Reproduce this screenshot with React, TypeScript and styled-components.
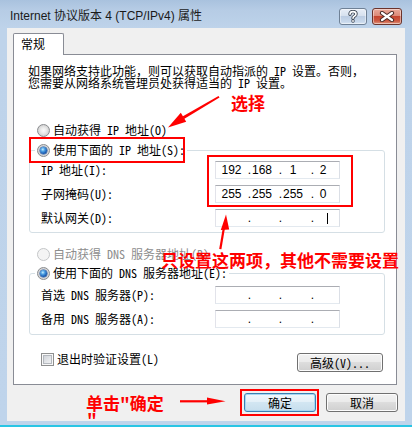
import React from "react";
import styled, { createGlobalStyle } from "styled-components";

const GlobalStyle = createGlobalStyle`
  html, body { margin: 0; padding: 0; background: #fff; }
  body { width: 412px; height: 427px; overflow: hidden; }
  *, *::before, *::after { box-sizing: border-box; }
`;

const UI_FONT = `"Noto Sans Mono CJK SC", "Noto Sans CJK SC", sans-serif`;

const Window = styled.div`
  position: relative;
  width: 412px;
  height: 427px;
  overflow: hidden;
  display: flex;
  flex-direction: column;
  padding: 0 7px;
  background: linear-gradient(180deg, #a9c2de 0px, #b6cce5 10px, #bed3ea 28px, #bfd4eb 100%);
  border-bottom: 2px solid #2ac5e4;
  font-family: ${UI_FONT};
  color: #000;
`;

const TitleBar = styled.div`
  height: 28px;
  flex: none;
  display: flex;
  align-items: flex-start;
  padding: 0 3px;
`;

const Title = styled.div`
  flex: 1;
  margin-top: 9px;
  font-family: "Liberation Sans", "Noto Sans CJK SC", sans-serif;
  font-size: 12px;
  line-height: 15px;
  color: #1a1a1a;
  white-space: nowrap;
`;

const CaptionButtons = styled.div`
  display: flex;
  gap: 5px;
  margin-top: 8px;
`;

const CaptionButton = styled.div<{ $close?: boolean }>`
  width: ${(p) => (p.$close ? 30 : 28)}px;
  height: 17px;
  border-radius: 3px;
  border: 1px solid ${(p) => (p.$close ? "#6b342c" : "#6f8196")};
  background: ${(p) =>
    p.$close
      ? "linear-gradient(180deg, #e9a99a 0%, #dc8a78 45%, #c5452f 50%, #cc5a43 80%, #e09a82 100%)"
      : "linear-gradient(180deg, #e8eef7 0%, #d6e1ef 45%, #bccde3 50%, #c9d9ec 85%, #dbe6f3 100%)"};
  box-shadow: inset 0 0 0 1px rgba(255, 255, 255, 0.45);
  display: flex;
  align-items: center;
  justify-content: center;
`;

const Client = styled.div`
  height: 393px;
  flex: none;
  background: #f0f0f0;
  padding: 5px 8px 0 6px;
  display: flex;
  flex-direction: column;
`;

const TabStrip = styled.div`
  display: flex;
`;

const Tab = styled.div`
  position: relative;
  z-index: 1;
  width: 51px;
  height: 22px;
  margin-bottom: -1px;
  padding: 2px 0 0 7px;
  border: 1px solid #898c95;
  border-bottom: none;
  border-radius: 2px 2px 0 0;
  background: #fff;
  font-size: 12px;
  line-height: 16px;
`;

const Panel = styled.div`
  height: 331px;
  flex: none;
  border: 1px solid #898c95;
  background: #fff;
  padding: 10px 11px 0 15px;
  display: flex;
  flex-direction: column;
`;

const Description = styled.div`
  margin-left: -1px;
  font-size: 12px;
  line-height: 12px;
  white-space: nowrap;
`;

const RadioRow = styled.div<{ $top: number; $disabled?: boolean }>`
  display: flex;
  align-items: center;
  gap: 3px;
  height: 16px;
  margin-top: ${(p) => p.$top}px;
  padding-left: 8px;
  font-size: 12px;
  line-height: 16px;
  white-space: nowrap;
  color: ${(p) => (p.$disabled ? "#8d8d8d" : "#000")};
`;

const RadioDot = styled.span<{ $checked?: boolean; $disabled?: boolean }>`
  flex: none;
  width: 13px;
  height: 13px;
  border-radius: 50%;
  border: 1px solid ${(p) => (p.$disabled ? "#c4c6c8" : "#8a8c8f")};
  background: ${(p) =>
    p.$disabled
      ? "#f4f4f4"
      : "radial-gradient(circle at 50% 50%, #fafafa 0, #ececec 35%, #d4d4d4 70%, #f2f2f2 100%)"};
  display: flex;
  align-items: center;
  justify-content: center;
  &::after {
    content: "";
    display: ${(p) => (p.$checked ? "block" : "none")};
    width: 7px;
    height: 7px;
    border-radius: 50%;
    background: radial-gradient(circle at 40% 35%, #c8eeff 0, #4fa2e4 30%, #1a5cb3 65%, #0b3a80 100%);
    box-shadow: 0 0 0 0.5px #1b4d96;
  }
`;

const GroupBox = styled.div<{ $top: number; $bottom: number }>`
  margin-top: ${(p) => p.$top}px;
  border: 1px solid #d5dfe5;
  border-radius: 3px;
  padding: 0 0 ${(p) => p.$bottom}px 11px;
  display: flex;
  flex-direction: column;
`;

const Legend = styled.div`
  align-self: flex-start;
  display: flex;
  align-items: center;
  gap: 3px;
  height: 16px;
  margin: -9px 0 0 -6px;
  padding: 0 2px;
  background: #fff;
  font-size: 12px;
  line-height: 16px;
  white-space: nowrap;
`;

const FieldGrid = styled.div<{ $top: number }>`
  display: grid;
  grid-template-columns: 174px 125px;
  row-gap: 6px;
  align-items: center;
  margin-top: ${(p) => p.$top}px;
`;

const FieldLabel = styled.div`
  font-size: 12px;
  line-height: 16px;
  white-space: nowrap;
`;

const IPBox = styled.div`
  height: 18px;
  border: 1px solid;
  border-color: #abadb3 #dbdfe6 #e3e9ef #e2e3ea;
  background: #fff;
  display: grid;
  grid-template-columns: 31px 4px 22px 9px 22px 10px 18px;
  align-items: center;
  font-family: "Liberation Sans", Arial, sans-serif;
  font-size: 12px;
  line-height: 16px;
`;

const Octet = styled.span`
  display: flex;
  justify-content: center;
  align-items: center;
  height: 16px;
`;

const Dot = styled.span`
  text-align: right;
`;

const Caret = styled.span`
  display: block;
  width: 1px;
  height: 11px;
  background: #000;
  margin-left: 13px;
`;

const OptionsRow = styled.div`
  display: flex;
  justify-content: space-between;
  align-items: flex-start;
  margin-top: 16px;
  padding: 0 2px 0 12px;
`;

const CheckRow = styled.label`
  display: flex;
  align-items: center;
  gap: 3px;
  height: 16px;
  font-size: 12px;
  line-height: 16px;
  white-space: nowrap;
`;

const CheckBox = styled.span`
  flex: none;
  width: 13px;
  height: 13px;
  border: 1px solid #8e8f8f;
  background: linear-gradient(135deg, #c6cad0 0%, #e6e8eb 60%, #f6f6f6 100%);
  box-shadow: inset 0 0 0 1px #f8f8f8, inset 0 0 0 2px #b4b8be;
`;

const Button = styled.div<{ $w: number; $primary?: boolean; $top?: number }>`
  width: ${(p) => p.$w}px;
  height: 19px;
  margin-top: ${(p) => p.$top ?? 0}px;
  border-radius: 3px;
  border: 1px solid ${(p) => (p.$primary ? "#3c7fb1" : "#707070")};
  background: ${(p) =>
    p.$primary
      ? "linear-gradient(180deg, #f1f8fc 0%, #e4f0f8 45%, #d2e6f2 50%, #c6deed 100%)"
      : "linear-gradient(180deg, #f2f2f2 0%, #ebebeb 45%, #dddddd 50%, #cfcfcf 100%)"};
  box-shadow: inset 0 0 0 1px ${(p) => (p.$primary ? "#a6d7f2" : "#fcfcfc")};
  display: flex;
  align-items: center;
  justify-content: center;
  font-size: 12px;
  line-height: 16px;
  white-space: nowrap;
`;

const ButtonRow = styled.div`
  display: flex;
  justify-content: flex-end;
  gap: 10px;
  margin-top: 8px;
  margin-right: -1px;
`;

/* ---------- annotation layer (drawn over the dialog) ---------- */

const Note = styled.div<{ $x: number; $y: number; $lh?: number }>`
  position: absolute;
  left: ${(p) => p.$x}px;
  top: ${(p) => p.$y}px;
  color: #ff0000;
  font-family: "Noto Sans CJK SC", sans-serif;
  font-weight: 700;
  font-size: 17px;
  line-height: ${(p) => p.$lh ?? 17}px;
  white-space: nowrap;
  pointer-events: none;
`;

const RedBox = styled.div<{ $x: number; $y: number; $w: number; $h: number }>`
  position: absolute;
  left: ${(p) => p.$x}px;
  top: ${(p) => p.$y}px;
  width: ${(p) => p.$w}px;
  height: ${(p) => p.$h}px;
  border: 2px solid #ff0000;
  pointer-events: none;
`;

const ArrowLayer = styled.svg`
  position: absolute;
  left: 0;
  top: 0;
  pointer-events: none;
`;

type IPProps = { octets?: [string, string, string, string]; caret?: boolean };

const IPField: React.FC<IPProps> = ({ octets = ["", "", "", ""], caret }) => (
  <IPBox>
    <Octet>{octets[0]}</Octet>
    <Dot>.</Dot>
    <Octet>{octets[1]}</Octet>
    <Dot>.</Dot>
    <Octet>{octets[2]}</Octet>
    <Dot>.</Dot>
    {caret ? <Caret /> : <Octet>{octets[3]}</Octet>}
  </IPBox>
);

export default function App() {
  return (
    <>
      <GlobalStyle />
      <Window>
        <TitleBar>
          <Title>Internet 协议版本 4 (TCP/IPv4) 属性</Title>
          <CaptionButtons>
            <CaptionButton>
              <svg width="12" height="13" viewBox="0 0 12 13">
                <path
                  d="M3 4.2 Q3 1.6 6 1.6 Q9 1.6 9 4 Q9 5.4 7.3 6.2 Q6 6.8 6 8.2"
                  fill="none"
                  stroke="#3b4452"
                  strokeWidth="3.4"
                  strokeLinecap="round"
                />
                <circle cx="6" cy="11" r="1.7" fill="#3b4452" />
                <path
                  d="M3 4.2 Q3 1.6 6 1.6 Q9 1.6 9 4 Q9 5.4 7.3 6.2 Q6 6.8 6 8.2"
                  fill="none"
                  stroke="#fff"
                  strokeWidth="1.6"
                  strokeLinecap="round"
                />
                <circle cx="6" cy="11" r="0.9" fill="#fff" />
              </svg>
            </CaptionButton>
            <CaptionButton $close>
              <svg width="16" height="11" viewBox="0 0 16 11">
                <path d="M3 2 L13 9 M13 2 L3 9" stroke="#4a2a26" strokeWidth="4.2" strokeLinecap="round" />
                <path d="M3 2 L13 9 M13 2 L3 9" stroke="#fff" strokeWidth="2.2" strokeLinecap="round" />
              </svg>
            </CaptionButton>
          </CaptionButtons>
        </TitleBar>

        <Client>
          <TabStrip>
            <Tab>常规</Tab>
          </TabStrip>
          <Panel>
            <Description>
              如果网络支持此功能，则可以获取自动指派的 IP 设置。否则，
              <br />
              您需要从网络系统管理员处获得适当的 IP 设置。
            </Description>

            <RadioRow $top={33}>
              <RadioDot />
              自动获得 IP 地址(O)
            </RadioRow>

            <GroupBox $top={12} $bottom={5}>
              <Legend>
                <RadioDot $checked />
                使用下面的 IP 地址(S):
              </Legend>
              <FieldGrid $top={3}>
                <FieldLabel>IP 地址(I):</FieldLabel>
                <IPField octets={["192", "168", "1", "2"]} />
                <FieldLabel>子网掩码(U):</FieldLabel>
                <IPField octets={["255", "255", "255", "0"]} />
                <FieldLabel>默认网关(D):</FieldLabel>
                <IPField caret />
              </FieldGrid>
            </GroupBox>

            <RadioRow $top={13} $disabled>
              <RadioDot $disabled />
              自动获得 DNS 服务器地址(B)
            </RadioRow>

            <GroupBox $top={11} $bottom={6}>
              <Legend>
                <RadioDot $checked />
                使用下面的 DNS 服务器地址(E):
              </Legend>
              <FieldGrid $top={5}>
                <FieldLabel>首选 DNS 服务器(P):</FieldLabel>
                <IPField />
                <FieldLabel>备用 DNS 服务器(A):</FieldLabel>
                <IPField />
              </FieldGrid>
            </GroupBox>

            <OptionsRow>
              <CheckRow>
                <CheckBox />
                退出时验证设置(L)
              </CheckRow>
              <Button $w={86} $top={2}>
                高级(V)...
              </Button>
            </OptionsRow>
          </Panel>

          <ButtonRow>
            <Button $w={72} $primary>
              确定
            </Button>
            <Button $w={72}>取消</Button>
          </ButtonRow>
        </Client>

        <RedBox $x={29} $y={137} $w={156} $h={26} />
        <RedBox $x={207} $y={155} $w={146} $h={52} />
        <RedBox $x={240} $y={389} $w={79} $h={27} />

        <Note $x={231} $y={94}>选择</Note>
        <Note $x={161} $y={251}>只设置这两项，其他不需要设置</Note>
        <Note $x={86} $y={394}>单击"确定</Note>
        <Note $x={87} $y={413} $lh={11}>"</Note>

        <ArrowLayer width="412" height="427" viewBox="0 0 412 427">
          <g fill="#ff0000" stroke="none">
            <path d="M218.5 96 L219.5 97.6 L184 119 L182.5 116.6 Z" />
            <polygon points="168,127.5 186.2,121.8 180.8,112.8" />
            <path d="M219.2 249 L221.4 249.3 L225 228 L222.8 227.7 Z" />
            <polygon points="226,214.5 220.8,230 229.2,229.5" />
            <rect x="180" y="400.2" width="29" height="2.2" />
            <polygon points="225.5,401.2 207,397.6 207,404.6" />
          </g>
        </ArrowLayer>
      </Window>
    </>
  );
}
